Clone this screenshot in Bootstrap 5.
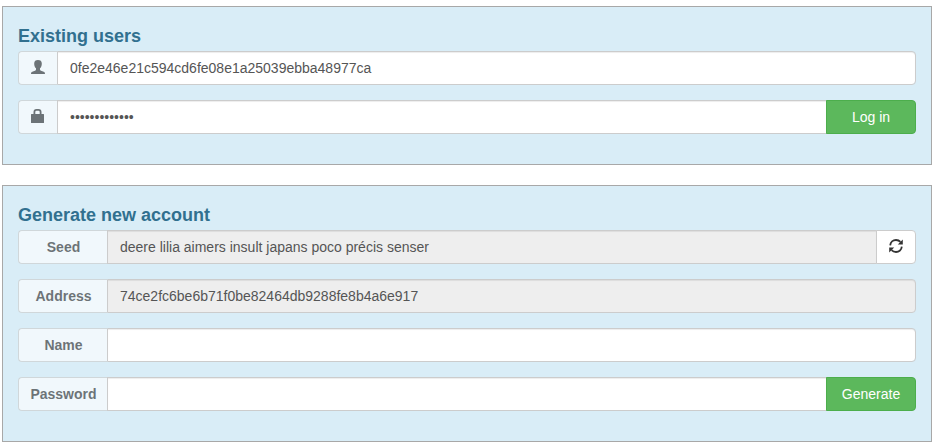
<!DOCTYPE html>
<html lang="en">
<head>
<meta charset="utf-8">
<meta name="viewport" content="width=device-width, initial-scale=1">
<title>Account</title>
<link href="https://cdn.jsdelivr.net/npm/bootstrap@5.3.0/dist/css/bootstrap.min.css" rel="stylesheet">
<style>
body { font: 14px/20px "Liberation Sans", Arial, sans-serif; background: #fff; padding: 6px 5px 0 2px; }
.account-panel { background: #d9edf7; border: 1px solid #a8a8a8; padding: 15px; margin-bottom: 20px; }
.account-title { font-size: 18px; line-height: 20px; font-weight: 700; color: #31708f; margin: 0; padding: 4px 0 5px; }
.input-group { height: 34px; margin-bottom: 15px; }
.input-group > .input-group-text { width: 39px; padding: 0; font-size: 14px; line-height: 20px; font-weight: 700; color: #333; background: #fff; border: 1px solid #ccc; border-right: 0; border-radius: 4px 0 0 4px; opacity: .65; }
.input-group > .input-group-text.label-wide { width: 89px; padding-left: 1px; }
.input-group > .form-control { font-size: 14px; line-height: 20px; padding: 6px 12px; color: #555; border: 1px solid #ccc; border-radius: 0 4px 4px 0; margin-left: 0 !important; box-shadow: inset 0 1px 1px rgba(0,0,0,.075); }
.input-group > .form-control[readonly] { background: #eee; }
.input-group > .btn { font-size: 14px; line-height: 20px; padding: 0; border-radius: 0 4px 4px 0; }
.btn-go { width: 90px; color: #fff; background: #5cb85c; border-color: #4cae4c; }
.btn-go:hover { color: #fff; background: #449d44; border-color: #398439; }
.btn-refresh { width: 40px; background: #fff; border-color: #ccc; color: #333; }
svg { display: block; margin-bottom: 2px; }
</style>
<script src="https://cdn.jsdelivr.net/npm/bootstrap@5.3.0/dist/js/bootstrap.bundle.min.js"></script>
</head>
<body>
<form class="account-panel">
  <h4 class="account-title">Existing users</h4>
  <div class="input-group">
    <span class="input-group-text justify-content-center"><svg width="14" height="14" viewBox="0 0 14 14" fill="currentColor"><path d="M7 0C4.600 0 3.200 1.200 3.200 3.400c0 1.900.5 3.700 1.800 4.900v1.200c0 .6-.3.900-1 1.200L1.300 11.800C.4 12.200 0 12.800 0 14h14c0-1.200-.4-1.800-1.300-2.200L10 10.700c-.7-.3-1-.6-1-1.200V8.300c1.300-1.200 1.800-3 1.800-4.900C10.800 1.200 9.400 0 7 0z"/></svg></span>
    <input type="text" class="form-control" aria-label="Address" value="0fe2e46e21c594cd6fe08e1a25039ebba48977ca">
  </div>
  <div class="input-group">
    <span class="input-group-text justify-content-center"><svg width="14" height="14" viewBox="0 0 14 14" fill="currentColor"><path fill-rule="evenodd" d="M2.500 5V3Q2.500 0 5.500 0h2q3 0 3 3v2h2q.5 0 .5.500v8q0 .5-.5.500h-12q-.5 0-.5-.5v-8Q0 5 .5 5zM4.300 5h4.400V3q0-1.200-1.200-1.200h-2Q4.300 1.800 4.300 3z"/></svg></span>
    <input type="password" class="form-control" aria-label="Password" value="correct-horse">
    <button type="button" class="btn btn-go">Log in</button>
  </div>
</form>
<form class="account-panel">
  <h4 class="account-title">Generate new account</h4>
  <div class="input-group">
    <span class="input-group-text label-wide justify-content-center">Seed</span>
    <input type="text" class="form-control" aria-label="Seed" readonly value="deere lilia aimers insult japans poco précis senser">
    <button type="button" class="btn btn-refresh d-flex align-items-center justify-content-center" aria-label="Refresh"><svg width="14" height="14" viewBox="0 0 14 14" fill="none" stroke="currentColor" stroke-width="1.8"><path d="M1.200 6.300C1.500 3.200 4 1 7 1c1.800 0 3.300.6 4.400 1.800M12.800 7.700C12.500 10.800 10 13 7 13c-1.800 0-3.300-.6-4.400-1.800"/><path fill="currentColor" stroke="none" d="M13.800.5v5H8.800zM.2 13.500v-5h5z"/></svg></button>
  </div>
  <div class="input-group">
    <span class="input-group-text label-wide justify-content-center">Address</span>
    <input type="text" class="form-control" aria-label="New address" readonly value="74ce2fc6be6b71f0be82464db9288fe8b4a6e917">
  </div>
  <div class="input-group">
    <span class="input-group-text label-wide justify-content-center">Name</span>
    <input type="text" class="form-control" aria-label="Name">
  </div>
  <div class="input-group">
    <span class="input-group-text label-wide justify-content-center">Password</span>
    <input type="password" class="form-control" aria-label="New password">
    <button type="button" class="btn btn-go">Generate</button>
  </div>
</form>
</body>
</html>
